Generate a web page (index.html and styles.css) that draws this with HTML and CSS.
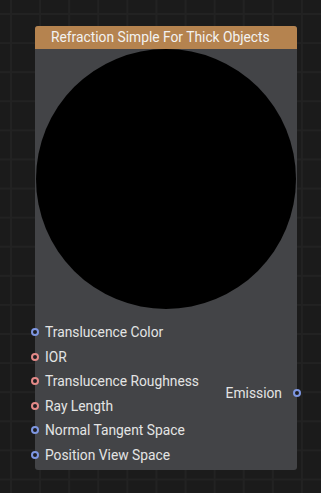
FILE: index.html
```html
<!DOCTYPE html>
<html>
<head>
	<title>Refraction Simple For Thick Objects</title>
	<link rel="stylesheet" href="styles.css">
</head>
<body>
	<div class="node">
		<div class="node-title">Refraction Simple For Thick Objects</div>
		<div class="preview">
			<div class="sphere"></div>
		</div>
		<div class="ports">
			<ul class="inputs">
				<li class="port"><span class="dot dot-blue"></span>Translucence Color</li>
				<li class="port"><span class="dot dot-red"></span>IOR</li>
				<li class="port"><span class="dot dot-red"></span>Translucence Roughness</li>
				<li class="port"><span class="dot dot-red"></span>Ray Length</li>
				<li class="port"><span class="dot dot-blue"></span>Normal Tangent Space</li>
				<li class="port"><span class="dot dot-blue"></span>Position View Space</li>
			</ul>
			<ul class="outputs">
				<li class="port port-out">Emission<span class="dot dot-blue"></span></li>
			</ul>
		</div>
	</div>
</body>
</html>
```

FILE: styles.css
```css
* {
  box-sizing: border-box;
  margin: 0;
  padding: 0;
}

body {
  font-family: Roboto, 'Liberation Sans', sans-serif;
  background-color: #1b1b1b;
  background-image:
    linear-gradient(to right, #222222 2px, transparent 2px),
    linear-gradient(to bottom, #222222 2px, transparent 2px);
  background-size: 29.1px 29.1px;
  background-position: 10px 13px;
  height: 493px;
  overflow: hidden;
  padding-top: 26px;
  padding-left: 35px;
}

.node {
  width: 262px;
  background-color: #434447;
  border-radius: 3px;
  padding-bottom: 2px;
}

.node-title {
  height: 23px;
  line-height: 23px;
  padding-left: 16px;
  background-color: #b5834f;
  border-radius: 3px 3px 0 0;
  color: #f2f2f2;
  font-size: 13.8px;
}

.preview {
  margin: 0 1px;
  height: 260px;
}

.sphere {
  width: 260px;
  height: 260px;
  border-radius: 50%;
  background-color: #000;
}

.ports {
  display: flex;
  justify-content: space-between;
  align-items: center;
  padding-top: 11px;
}

.inputs, .outputs {
  list-style: none;
}

.port {
  position: relative;
  height: 24.6px;
  line-height: 24.6px;
  padding-left: 10px;
  color: #e4e4e4;
  font-size: 13.8px;
}

.port-out {
  padding-left: 0;
  padding-right: 15px;
}

.dot {
  position: absolute;
  left: -4px;
  top: 8px;
  width: 8px;
  height: 8px;
  border-radius: 50%;
  border: 2px solid;
  background-color: #1e1e22;
}

.port-out .dot {
  left: auto;
  right: -4px;
}

.dot-blue {
  border-color: #7e97e2;
}

.dot-red {
  border-color: #e48a88;
}
```
